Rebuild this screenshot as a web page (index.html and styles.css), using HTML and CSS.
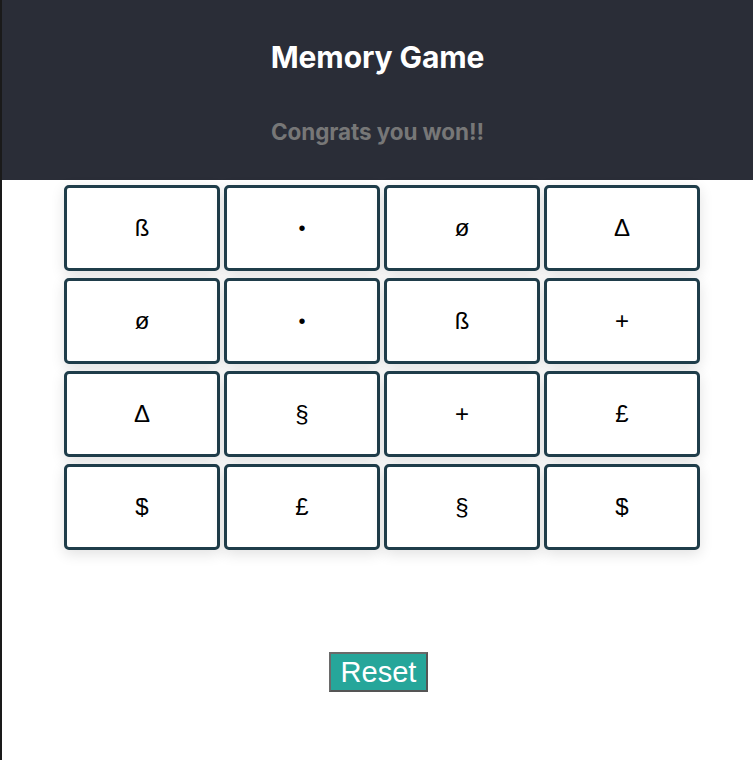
FILE: index.html
```html
<!DOCTYPE html>
<html lang="en">
<head>
<meta charset="utf-8">
<title>Memory Game</title>
<link rel="stylesheet" href="styles.css">
</head>
<body>
<div class="app">
  <header class="header">
    <h1 class="title">Memory Game</h1>
    <p class="status">Congrats you won!!</p>
  </header>
  <div class="board">
    <div class="card">ß</div>
    <div class="card dot">•</div>
    <div class="card">ø</div>
    <div class="card">Δ</div>
    <div class="card">ø</div>
    <div class="card dot">•</div>
    <div class="card">ß</div>
    <div class="card">+</div>
    <div class="card">Δ</div>
    <div class="card">§</div>
    <div class="card">+</div>
    <div class="card">£</div>
    <div class="card">$</div>
    <div class="card">£</div>
    <div class="card">§</div>
    <div class="card">$</div>
  </div>
  <div class="actions">
    <button class="reset">Reset</button>
  </div>
</div>
</body>
</html>
```
FILE: styles.css
```css
html, body {
  margin: 0;
  padding: 0;
  background: #ffffff;
}
body {
  font-family: "Inter", "Liberation Sans", sans-serif;
}
.app {
  min-height: 760px;
  border-left: 2px solid #1a1a1a;
  box-sizing: border-box;
}
.header {
  background: #2a2d37;
  height: 180px;
  display: flex;
  flex-direction: column;
  align-items: center;
  padding-top: 39px;
  box-sizing: border-box;
}
.title {
  margin: 0;
  color: #ffffff;
  font-size: 30px;
  font-weight: 700;
  line-height: 36px;
  letter-spacing: -0.1px;
}
.status {
  margin: 44px 0 0;
  color: #777777;
  font-size: 22.5px;
  font-weight: 700;
  line-height: 26px;
  letter-spacing: -0.1px;
}
.board {
  display: grid;
  grid-template-columns: repeat(4, 156px);
  grid-auto-rows: 86px;
  column-gap: 4px;
  row-gap: 7px;
  width: 636px;
  margin: 5px 0 0 62px;
}
.card {
  border: 3px solid #1f3d4a;
  border-radius: 5px;
  background: #ffffff;
  box-shadow: 0 4px 14px rgba(0, 0, 0, 0.12);
  display: flex;
  align-items: center;
  justify-content: center;
  font-family: "Liberation Sans", "Inter", sans-serif;
  font-size: 24px;
  color: #000000;
}
.card.dot {
  font-size: 20px;
}
.actions {
  display: flex;
  justify-content: center;
  padding-top: 102px;
  padding-left: 2px;
}
.reset {
  background: #26a69a;
  color: #ffffff;
  border: 2px solid #555555;
  border-top-color: #6a6a6a;
  border-left-color: #6a6a6a;
  font-family: "Liberation Sans", sans-serif;
  font-size: 29px;
  line-height: 32px;
  padding: 2px 10px;
  border-radius: 0;
}
```
